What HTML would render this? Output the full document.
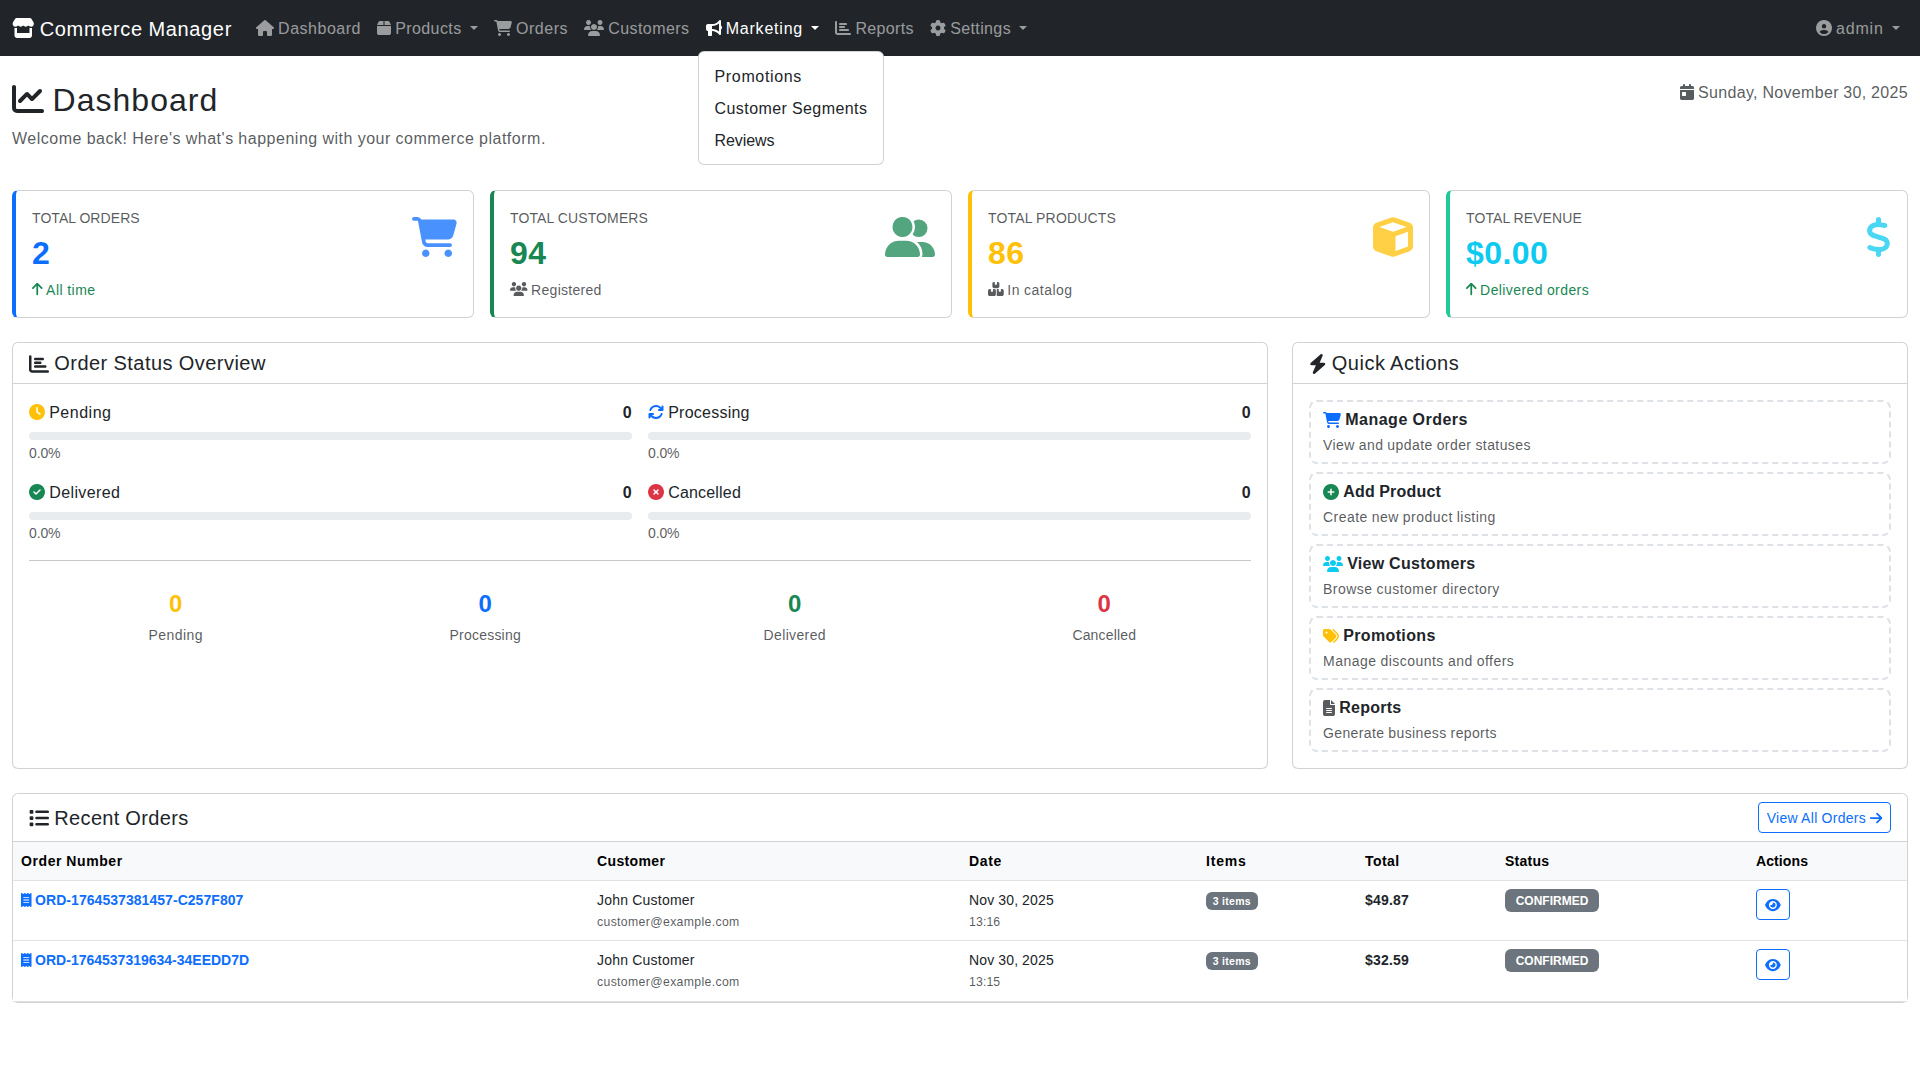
<!DOCTYPE html>
<html><head><meta charset="utf-8"><title>Commerce Manager - Dashboard</title>
<style>
*,*::before,*::after{box-sizing:border-box}
html,body{margin:0;padding:0}
body{font-family:"Liberation Sans", sans-serif;word-spacing:-0.018em;font-size:16px;line-height:1.5;color:#212529;background:#fff;width:1920px;height:1080px;overflow:hidden;position:relative}
.t{position:relative;top:.0415em}
svg.i{display:inline-block;height:1em;vertical-align:-0.125em;overflow:visible;fill:currentColor;position:relative;top:.0415em}
a{text-decoration:none;color:inherit}
h2,h4,h5,h6,p{margin:0}
/* navbar */
.navbar{position:relative;height:56px;background:#212529;padding:8px 0;}
.nav-c{display:flex;align-items:center;padding:0 12px;height:40px}
.brand{font-size:20px;line-height:30px;padding:5px 0;margin-right:16px;color:#fff;white-space:nowrap}
.nav{display:flex;list-style:none;margin:0;padding:0}
.nav.me-auto{margin-right:auto}
.nav li{position:relative}
.nl{display:block;padding:8px;color:rgba(255,255,255,.55);white-space:nowrap;line-height:24px}
.nl.act{color:#fff}
.dt::after{position:relative;top:1px;display:inline-block;margin-left:calc(.255em + 0.26em);vertical-align:.255em;content:"";border-top:.3em solid;border-right:.3em solid transparent;border-bottom:0;border-left:.3em solid transparent}
.dm{position:absolute;left:0;top:43px;z-index:10;min-width:160px;padding:8px 0;margin:0;list-style:none;background:#fff;border:1px solid rgba(0,0,0,.175);border-radius:6px;color:#212529}
.dm a{display:block;padding:4px 16px;white-space:nowrap;line-height:24px}
/* main */
.main{padding:24px 12px 0}
.hdr{display:flex;justify-content:space-between;align-items:flex-start;margin-bottom:24px}
.hdr h2{font-size:32px;line-height:1.2;font-weight:400;margin-bottom:8px}
.hdr p{margin-bottom:16px}
.muted{color:rgba(33,37,41,.75)}
.row{display:flex}
.card{position:relative;background:#fff;border:1px solid rgba(0,0,0,.175);border-radius:6px}
/* stat cards */
.stats{display:flex;gap:16px;margin-bottom:24px}
.stat{flex:1 1 0;height:128px;border-left:4px solid;}
.stat .body{padding:16px;display:flex;justify-content:space-between;align-items:flex-start;height:100%}
.stat .lbl{font-size:14px;line-height:21px;text-transform:uppercase;color:rgba(33,37,41,.75);letter-spacing:.75px}
.stat .num{font-size:32px;line-height:38.4px;font-weight:700;margin-top:6px}
.stat .sub{font-size:14px;line-height:21px;margin-top:6px}
.stat .big{font-size:40px;line-height:40px;opacity:.75;margin-top:10px}
.stat .big svg.i{top:0}
.stat .num .t{top:0}
.stat .sub .t{top:1.2px}
.qa p .t{top:1.5px}
.qa h6 .t{top:0}
.ch h5 .t{top:-.2px}
.c-primary{color:#0d6efd}.c-success{color:#198754}.c-warning{color:#ffc107}.c-info{color:#0dcaf0}.c-danger{color:#dc3545}
.b-primary{border-left-color:#0d6efd}.b-success{border-left-color:#198754}.b-warning{border-left-color:#ffc107}.b-info{border-left-color:#20c997}
/* mid row */
.mid{display:flex;gap:24px;margin-bottom:24px;height:427px}
.mid .card{height:100%}
.ch{padding:8px 16px;border-bottom:1px solid rgba(0,0,0,.175);background:#fff;border-radius:6px 6px 0 0}
.ch h5{font-size:20px;line-height:24px;font-weight:400}
.cb{padding:16px}
.osgrid{display:grid;grid-template-columns:1fr 1fr;column-gap:16px;row-gap:16px}
.os .top{display:flex;justify-content:space-between;margin-bottom:8px}
.prog{height:8px;background:#e9ecef;border-radius:6px}
.os .pct{font-size:14px}
.hr{border-top:1px solid rgba(33,37,41,.25);margin:16px 0}
.sums{display:grid;grid-template-columns:repeat(4,1fr);margin:0 -8px;padding-top:12px;text-align:center}
.sums h4{font-size:24px;line-height:28.8px;font-weight:700;margin-bottom:4px}
.sums .l{font-size:14px}
.qa{display:block;border:2px dashed #dee2e6;border-radius:8px;padding:8px 12px;margin-bottom:8px}
.qa:last-child{margin-bottom:0}
.qa h6{font-size:16px;line-height:19px;font-weight:700;margin-bottom:4px}
.qa p{font-size:14px;line-height:21px;color:rgba(33,37,41,.75)}
/* orders */
.ro .ch{display:flex;justify-content:space-between;align-items:center}
.btn-o{display:inline-block;border:1px solid #0d6efd;color:#0d6efd;border-radius:4px;padding:4px 8px;font-size:14px;line-height:21px;background:#fff}
table{border-collapse:collapse;width:100%;table-layout:fixed;font-size:14px;line-height:21px}
th{text-align:left;font-weight:700;padding:8px 8px 9px;background:#f8f9fa;border-bottom:1px solid #dee2e6;color:#000}
td{padding:8px;vertical-align:top;border-bottom:1px solid #dee2e6;background:#fff}
.badge{display:inline-block;font-size:10.5px;line-height:1;font-weight:700;color:#fff;background:#6c757d;border-radius:6px;padding:3.675px 6.825px;vertical-align:baseline}
.sbadge{display:inline-block;font-size:12px;line-height:1;font-weight:700;color:#fff;background:#6c757d;border-radius:6px;padding:5.25px 10.65px}
.small{font-size:12.25px}
tbody tr:last-child td{padding-bottom:9px}
.ord{color:#0d6efd;font-weight:700}
.eye{display:inline-block;border:1px solid #0d6efd;color:#0d6efd;border-radius:4px;padding:4px 8px;font-size:14px;line-height:21px}
</style></head><body><nav class="navbar"><div class="nav-c">
<a class="brand"><svg class="i" viewBox="0 0 576 512" style="width:1.1250em"><path d="M548 104 490 13 548 104 490 13Q482 0 466 0H110Q94 0 86 13L28 104Q7 141 22 178Q38 215 80 223Q86 224 92 224Q133 223 158 195Q182 223 223 224Q263 223 288 195Q313 223 353 224Q393 223 418 195Q443 223 484 224Q490 224 496 223Q538 215 554 178Q569 141 548 104ZM500 255Q492 256 483 256Q465 256 448 251V384H128V251Q111 256 92 256Q84 256 76 255Q70 254 64 253V384V448Q65 475 83 493Q101 511 128 512H448Q475 511 493 493Q511 475 512 448V384V253Q506 254 500 255Z"/></svg> <span class="t" style="letter-spacing:0.634px">Commerce Manager</span></a>
<ul class="nav me-auto">
<li><a class="nl"><svg class="i" viewBox="0 0 576 512" style="width:1.1250em"><path d="M576 256Q575 269 566 278Q557 287 544 288H512L513 448Q512 452 512 456V472Q512 489 500 500Q489 512 472 512H456Q454 512 453 512Q451 512 449 512H416H392Q375 512 364 500Q352 489 352 472V448V384Q352 370 343 361Q334 352 320 352H256Q242 352 233 361Q224 370 224 384V448V472Q224 489 212 500Q201 512 184 512H160H128Q127 512 126 512Q125 512 124 512Q122 512 120 512H104Q87 512 76 500Q64 489 64 472V360Q64 359 64 357V288H32Q18 287 9 278Q0 269 0 256Q0 242 10 232L266 8Q277 -1 288 0Q300 0 309 7L565 232Q577 242 576 256Z"/></svg> <span class="t" style="letter-spacing:0.507px">Dashboard</span></a></li>
<li><a class="nl dt"><svg class="i" viewBox="0 0 448 512" style="width:0.8750em"><path d="M51 59 0 160 51 59 0 160H208V32H94Q65 33 51 59ZM240 160H448H240H448L397 59Q383 33 354 32H240V160ZM448 192H0H448H0V416Q1 443 19 461Q37 479 64 480H384Q411 479 429 461Q447 443 448 416V192Z"/></svg> <span class="t" style="letter-spacing:0.420px">Products</span></a></li>
<li><a class="nl"><svg class="i" viewBox="0 0 576 512" style="width:1.1250em"><path d="M0 24Q2 2 24 0H70Q104 2 120 32H531Q551 33 563 48Q574 63 570 82L529 235Q522 259 503 273Q484 288 459 288H171L176 317Q181 335 200 336H488Q510 338 512 360Q510 382 488 384H200Q173 384 154 367Q134 351 129 326L77 55Q76 48 70 48H24Q2 46 0 24ZM128 464Q129 437 152 422Q176 410 200 422Q223 437 224 464Q223 491 200 506Q176 518 152 506Q129 491 128 464ZM464 416Q491 417 506 440Q518 464 506 488Q491 511 464 512Q437 511 422 488Q410 464 422 440Q437 417 464 416Z"/></svg> <span class="t" style="letter-spacing:0.503px">Orders</span></a></li>
<li><a class="nl"><svg class="i" viewBox="0 0 640 512" style="width:1.2500em"><path d="M144 0Q189 1 213 40Q235 80 213 120Q189 159 144 160Q99 159 75 120Q53 80 75 40Q99 1 144 0ZM512 0Q557 1 581 40Q603 80 581 120Q557 159 512 160Q467 159 443 120Q421 80 443 40Q467 1 512 0ZM0 299Q1 253 31 223Q61 193 107 192H149Q173 192 194 202Q192 213 192 224Q194 283 235 320Q235 320 235 320Q235 320 235 320H21Q2 318 0 299ZM405 320Q405 320 405 320Q405 320 405 320Q446 283 448 224Q448 213 446 202Q467 192 491 192H533Q579 193 609 223Q639 253 640 299Q638 318 619 320H405ZM224 224Q224 198 237 176Q250 154 272 141Q295 128 320 128Q345 128 368 141Q390 154 403 176Q416 198 416 224Q416 250 403 272Q390 294 368 307Q345 320 320 320Q295 320 272 307Q250 294 237 272Q224 250 224 224ZM128 485Q129 429 167 391Q205 353 261 352H379Q435 353 473 391Q511 429 512 485Q510 510 485 512H155Q130 510 128 485Z"/></svg> <span class="t" style="letter-spacing:0.448px">Customers</span></a></li>
<li><a class="nl dt act"><svg class="i" viewBox="0 0 512 512" style="width:1.0000em"><path d="M480 32Q479 11 460 2Q441 -5 425 9L382 53Q345 89 299 109Q252 128 201 128H192H64Q37 129 19 147Q1 165 0 192V288Q1 315 19 333Q37 351 64 352V480Q64 494 73 503Q82 512 96 512H160Q174 512 183 503Q192 494 192 480V352H201Q252 352 299 372Q345 391 382 427L425 471Q441 485 460 478Q479 469 480 448V300Q494 293 503 277Q512 261 512 240Q512 219 503 203Q494 187 480 180V32ZM416 109V240V109V240V371Q371 331 316 310Q261 288 201 288H192V192H201Q261 192 316 170Q371 149 416 109Z"/></svg> <span class="t" style="letter-spacing:0.783px">Marketing</span></a>
<ul class="dm"><li><a><span class="t" style="letter-spacing:0.652px">Promotions</span></a></li><li><a><span class="t" style="letter-spacing:0.428px">Customer Segments</span></a></li><li><a><span class="t" style="letter-spacing:-0.087px">Reviews</span></a></li></ul></li>
<li><a class="nl"><svg class="i" viewBox="0 0 512 512" style="width:1.0000em"><path d="M32 32Q46 32 55 41Q64 50 64 64V400Q65 415 80 416H480Q494 416 503 425Q512 434 512 448Q512 462 503 471Q494 480 480 480H80Q46 479 23 457Q1 434 0 400V64Q0 50 9 41Q18 32 32 32ZM128 128Q128 114 137 105Q146 96 160 96H352Q366 96 375 105Q384 114 384 128Q384 142 375 151Q366 160 352 160H160Q146 160 137 151Q128 142 128 128ZM160 192H288H160H288Q302 192 311 201Q320 210 320 224Q320 238 311 247Q302 256 288 256H160Q146 256 137 247Q128 238 128 224Q128 210 137 201Q146 192 160 192ZM160 288H416H160H416Q430 288 439 297Q448 306 448 320Q448 334 439 343Q430 352 416 352H160Q146 352 137 343Q128 334 128 320Q128 306 137 297Q146 288 160 288Z"/></svg> <span class="t" style="letter-spacing:0.359px">Reports</span></a></li>
<li><a class="nl dt"><svg class="i" viewBox="0 0 512 512" style="width:1.0000em"><path d="M496 167Q500 181 490 191L446 231Q448 243 448 256Q448 269 446 281L490 321Q500 331 496 345Q489 363 480 380L475 388Q465 404 453 419Q443 430 429 426L373 408Q353 424 329 433L317 491Q313 505 298 508Q278 512 256 512Q234 512 213 508Q199 505 195 491L183 433Q159 424 139 408L83 426Q69 430 59 419Q46 404 37 388L32 380Q23 363 16 346Q12 331 22 321L66 282Q64 269 64 256Q64 243 66 231L22 191Q12 181 16 167Q23 149 32 132L37 124Q46 108 59 93Q69 82 83 86L139 104Q159 88 183 78L195 21Q199 7 214 4Q234 0 256 0Q278 0 299 4Q313 7 317 21L329 78Q353 88 373 104L429 86Q443 82 453 93Q466 108 476 124L480 132Q489 149 496 167ZM256 336Q301 335 325 296Q347 256 325 216Q301 177 256 176Q211 177 187 216Q165 256 187 296Q211 335 256 336Z"/></svg> <span class="t" style="letter-spacing:0.385px">Settings</span></a></li>
</ul>
<ul class="nav"><li><a class="nl dt"><svg class="i" viewBox="0 0 512 512" style="width:1.0000em"><path d="M399 384Q382 355 353 338Q324 320 288 320H224Q188 320 159 338Q130 355 113 384Q140 414 176 431Q213 448 256 448Q299 448 336 431Q372 414 399 384ZM0 256Q1 186 34 128Q68 70 128 34Q189 0 256 0Q323 0 384 34Q444 70 478 128Q511 186 512 256Q511 326 478 384Q444 442 384 478Q323 512 256 512Q189 512 128 478Q68 442 34 384Q1 326 0 256ZM256 272Q297 271 318 236Q338 200 318 164Q297 129 256 128Q215 129 194 164Q174 200 194 236Q215 271 256 272Z"/></svg> <span class="t" style="letter-spacing:0.844px">admin</span></a></li></ul>
</div></nav><div class="main"><div class="hdr"><div>
<h2><svg class="i" viewBox="0 0 512 512" style="width:1.0000em"><path d="M64 64Q64 50 55 41Q46 32 32 32Q18 32 9 41Q0 50 0 64V400Q1 434 23 457Q46 479 80 480H480Q494 480 503 471Q512 462 512 448Q512 434 503 425Q494 416 480 416H80Q65 415 64 400V64ZM471 151Q480 141 480 128Q480 115 471 105Q461 96 448 96Q435 96 425 105L320 211L263 153Q253 144 240 144Q227 144 217 153L105 265Q96 275 96 288Q96 301 105 311Q115 320 128 320Q141 320 151 311L240 221L297 279Q307 288 320 288Q333 288 343 279L471 151Z"/></svg> <span class="t" style="letter-spacing:1.014px">Dashboard</span></h2>
<p class="muted"><span class="t" style="letter-spacing:0.518px">Welcome back! Here's what's happening with your commerce platform.</span></p>
</div>
<div class="muted"><svg class="i" viewBox="0 0 448 512" style="width:0.8750em"><path d="M128 0Q142 0 151 9Q160 18 160 32V64H288V32Q288 18 297 9Q306 0 320 0Q334 0 343 9Q352 18 352 32V64H400Q420 65 434 78Q447 92 448 112V160H0V112Q1 92 14 78Q28 65 48 64H96V32Q96 18 105 9Q114 0 128 0ZM0 192H448H0H448V464Q447 484 434 498Q420 511 400 512H48Q28 511 14 498Q1 484 0 464V192ZM80 256Q65 257 64 272V368Q65 383 80 384H176Q191 383 192 368V272Q191 257 176 256H80Z"/></svg> <span class="t" style="letter-spacing:0.333px">Sunday, November 30, 2025</span></div></div><div class="stats"><div class="card stat b-primary"><div class="body"><div>
<div class="lbl"><span class="t" style="letter-spacing:0.082px">Total Orders</span></div>
<div class="num c-primary"><span class="t" style="letter-spacing:0.516px">2</span></div>
<div class="sub c-success"><svg class="i" viewBox="0 0 384 512" style="width:0.7500em"><path d="M215 41Q205 32 192 32Q179 32 169 41L9 201Q0 211 0 224Q0 237 9 247Q19 256 32 256Q45 256 55 247L160 141V448Q160 462 169 471Q178 480 192 480Q206 480 215 471Q224 462 224 448V141L329 247Q339 256 352 256Q365 256 375 247Q384 237 384 224Q384 211 375 201L215 41Z"/></svg> <span class="t" style="letter-spacing:0.482px">All time</span></div>
</div><div class="big c-primary"><svg class="i" viewBox="0 0 576 512" style="width:1.1250em"><path d="M0 24Q2 2 24 0H70Q104 2 120 32H531Q551 33 563 48Q574 63 570 82L529 235Q522 259 503 273Q484 288 459 288H171L176 317Q181 335 200 336H488Q510 338 512 360Q510 382 488 384H200Q173 384 154 367Q134 351 129 326L77 55Q76 48 70 48H24Q2 46 0 24ZM128 464Q129 437 152 422Q176 410 200 422Q223 437 224 464Q223 491 200 506Q176 518 152 506Q129 491 128 464ZM464 416Q491 417 506 440Q518 464 506 488Q491 511 464 512Q437 511 422 488Q410 464 422 440Q437 417 464 416Z"/></svg></div></div></div><div class="card stat b-success"><div class="body"><div>
<div class="lbl"><span class="t" style="letter-spacing:0.131px">Total Customers</span></div>
<div class="num c-success"><span class="t" style="letter-spacing:0.508px">94</span></div>
<div class="sub muted"><svg class="i" viewBox="0 0 640 512" style="width:1.2500em"><path d="M144 0Q189 1 213 40Q235 80 213 120Q189 159 144 160Q99 159 75 120Q53 80 75 40Q99 1 144 0ZM512 0Q557 1 581 40Q603 80 581 120Q557 159 512 160Q467 159 443 120Q421 80 443 40Q467 1 512 0ZM0 299Q1 253 31 223Q61 193 107 192H149Q173 192 194 202Q192 213 192 224Q194 283 235 320Q235 320 235 320Q235 320 235 320H21Q2 318 0 299ZM405 320Q405 320 405 320Q405 320 405 320Q446 283 448 224Q448 213 446 202Q467 192 491 192H533Q579 193 609 223Q639 253 640 299Q638 318 619 320H405ZM224 224Q224 198 237 176Q250 154 272 141Q295 128 320 128Q345 128 368 141Q390 154 403 176Q416 198 416 224Q416 250 403 272Q390 294 368 307Q345 320 320 320Q295 320 272 307Q250 294 237 272Q224 250 224 224ZM128 485Q129 429 167 391Q205 353 261 352H379Q435 353 473 391Q511 429 512 485Q510 510 485 512H155Q130 510 128 485Z"/></svg> <span class="t" style="letter-spacing:0.280px">Registered</span></div>
</div><div class="big c-success"><svg class="i" viewBox="0 0 640 512" style="width:1.2500em"><path d="M96 128Q96 93 113 64Q130 35 160 17Q190 0 224 0Q258 0 288 17Q318 35 335 64Q352 93 352 128Q352 163 335 192Q318 221 288 239Q258 256 224 256Q190 256 160 239Q130 221 113 192Q96 163 96 128ZM0 482Q2 407 52 356Q103 306 178 304H270Q345 306 396 356Q446 407 448 482Q448 495 439 503Q431 512 418 512H30Q17 512 9 503Q0 495 0 482ZM609 512H471H609H471Q480 498 480 480V472Q480 426 461 387Q443 348 410 320Q410 320 410 320Q414 320 417 320H479Q547 322 593 367Q638 413 640 481Q640 494 631 503Q622 512 609 512ZM432 256Q384 255 353 223Q383 182 384 128Q384 87 366 54Q394 33 432 32Q480 33 511 65Q543 96 544 144Q543 192 511 223Q480 255 432 256Z"/></svg></div></div></div><div class="card stat b-warning"><div class="body"><div>
<div class="lbl"><span class="t" style="letter-spacing:0.191px">Total Products</span></div>
<div class="num c-warning"><span class="t" style="letter-spacing:0.508px">86</span></div>
<div class="sub muted"><svg class="i" viewBox="0 0 576 512" style="width:1.1250em"><path d="M248 0H208H248H208Q188 1 174 14Q161 28 160 48V160Q161 187 179 205Q197 223 224 224H352Q379 223 397 205Q415 187 416 160V48Q415 28 402 14Q388 1 368 0H328V80Q327 95 312 96H264Q249 95 248 80V0ZM64 256Q37 257 19 275Q1 293 0 320V448Q1 475 19 493Q37 511 64 512H224Q251 511 269 493Q287 475 288 448V320Q287 293 269 275Q251 257 224 256H184V336Q183 351 168 352H120Q105 351 104 336V256H64ZM352 512H512H352H512Q539 511 557 493Q575 475 576 448V320Q575 293 557 275Q539 257 512 256H472V336Q471 351 456 352H408Q393 351 392 336V256H352Q329 256 312 270Q320 286 320 304V464Q320 482 312 498Q329 512 352 512Z"/></svg> <span class="t" style="letter-spacing:0.478px">In catalog</span></div>
</div><div class="big c-warning"><svg class="i" viewBox="0 0 512 512" style="width:1.0000em"><path d="M235 6Q256 -2 278 6L470 74Q489 82 500 98Q512 114 512 135V377Q512 398 500 414Q489 430 470 438L278 506Q256 514 234 506L42 438Q23 431 12 414Q0 398 0 377V135Q0 114 12 98Q23 82 43 74L235 6ZM256 66 82 128 256 66 82 128 256 190 430 128 256 66ZM288 435 448 378 288 435 448 378V190L288 247V435Z"/></svg></div></div></div><div class="card stat b-info"><div class="body"><div>
<div class="lbl"><span class="t" style="letter-spacing:0.095px">Total Revenue</span></div>
<div class="num c-info"><span class="t" style="letter-spacing:0.428px">$0.00</span></div>
<div class="sub c-success"><svg class="i" viewBox="0 0 384 512" style="width:0.7500em"><path d="M215 41Q205 32 192 32Q179 32 169 41L9 201Q0 211 0 224Q0 237 9 247Q19 256 32 256Q45 256 55 247L160 141V448Q160 462 169 471Q178 480 192 480Q206 480 215 471Q224 462 224 448V141L329 247Q339 256 352 256Q365 256 375 247Q384 237 384 224Q384 211 375 201L215 41Z"/></svg> <span class="t" style="letter-spacing:0.408px">Delivered orders</span></div>
</div><div class="big c-info"><svg class="i" viewBox="0 0 320 512" style="width:0.6250em"><path d="M160 0Q174 0 183 9Q192 18 192 32V68Q194 68 197 68Q197 68 197 68Q198 69 198 69L246 77Q259 80 266 91Q274 101 272 115Q269 128 258 135Q248 142 234 140L187 132Q139 125 109 138Q81 150 80 166Q77 181 81 186Q83 192 94 199Q118 214 167 226L170 227Q171 227 171 227Q193 232 216 240Q240 248 260 260Q282 274 296 300Q308 327 302 359Q296 388 279 407Q261 426 236 436Q216 444 192 447V480Q192 494 183 503Q174 512 160 512Q146 512 137 503Q128 494 128 480V445Q128 445 127 445Q127 445 127 445H126Q107 442 82 435Q56 428 35 419Q23 413 18 401Q14 389 19 376Q25 364 37 360Q48 355 61 360Q78 367 99 373Q120 379 136 382Q185 388 212 377Q237 366 239 348Q241 332 238 327Q235 321 225 314Q200 299 151 288L148 287Q148 287 148 287Q126 281 102 273Q78 266 58 253Q36 239 23 213Q10 186 17 154Q22 126 41 107Q60 88 85 78Q105 70 128 67V32Q128 18 137 9Q146 0 160 0Z"/></svg></div></div></div></div><div class="mid"><div class="card" style="flex:0 0 1256px">
<div class="ch"><h5><svg class="i" viewBox="0 0 512 512" style="width:1.0000em"><path d="M32 32Q46 32 55 41Q64 50 64 64V400Q65 415 80 416H480Q494 416 503 425Q512 434 512 448Q512 462 503 471Q494 480 480 480H80Q46 479 23 457Q1 434 0 400V64Q0 50 9 41Q18 32 32 32ZM128 128Q128 114 137 105Q146 96 160 96H352Q366 96 375 105Q384 114 384 128Q384 142 375 151Q366 160 352 160H160Q146 160 137 151Q128 142 128 128ZM160 192H288H160H288Q302 192 311 201Q320 210 320 224Q320 238 311 247Q302 256 288 256H160Q146 256 137 247Q128 238 128 224Q128 210 137 201Q146 192 160 192ZM160 288H416H160H416Q430 288 439 297Q448 306 448 320Q448 334 439 343Q430 352 416 352H160Q146 352 137 343Q128 334 128 320Q128 306 137 297Q146 288 160 288Z"/></svg> <span class="t" style="letter-spacing:0.468px">Order Status Overview</span></h5></div>
<div class="cb">
<div class="osgrid"><div class="os"><div class="top"><span><span class="c-warning"><svg class="i" viewBox="0 0 512 512" style="width:1.0000em"><path d="M256 0Q326 1 384 34Q442 68 478 128Q512 189 512 256Q512 323 478 384Q442 444 384 478Q326 511 256 512Q186 511 128 478Q70 444 34 384Q0 323 0 256Q0 189 34 128Q70 68 128 34Q186 1 256 0ZM232 120V256V120V256Q232 269 243 276L339 340Q358 351 372 333Q383 314 365 300L280 243V120Q278 98 256 96Q234 98 232 120Z"/></svg></span> <span class="t" style="letter-spacing:0.511px">Pending</span></span><b><span class="t" style="letter-spacing:0.250px">0</span></b></div>
<div class="prog"></div><div><span class="pct muted"><span class="t" style="letter-spacing:-0.129px">0.0%</span></span></div></div><div class="os"><div class="top"><span><span class="c-primary"><svg class="i" viewBox="0 0 512 512" style="width:1.0000em"><path d="M105 203Q117 169 143 143Q192 96 256 96Q320 96 369 143L386 160H352Q338 160 329 169Q320 178 320 192Q320 206 329 215Q338 224 352 224H464Q464 224 464 224Q464 224 464 224Q478 224 487 215Q496 206 496 192V80Q496 66 487 57Q478 48 464 48Q450 48 441 57Q432 66 432 80V115L414 98Q370 54 313 39Q256 25 199 39Q142 54 98 98Q61 135 45 181Q41 194 46 206Q52 217 64 222Q77 226 89 221Q100 215 105 203ZM39 289Q31 292 25 298Q19 304 17 312Q17 313 16 315Q16 318 16 320V432Q16 446 25 455Q34 464 48 464Q62 464 71 455Q80 446 80 432V397L98 414Q142 458 199 473Q256 487 313 473Q370 458 414 414Q451 377 467 331Q471 318 466 306Q460 295 448 290Q435 286 423 291Q412 297 407 309Q395 343 369 369Q320 416 256 416Q192 416 143 369L126 352H160Q174 352 183 343Q192 334 192 320Q192 306 183 297Q174 288 160 288H48Q46 288 44 288Q41 289 39 289Z"/></svg></span> <span class="t" style="letter-spacing:0.239px">Processing</span></span><b><span class="t" style="letter-spacing:0.250px">0</span></b></div>
<div class="prog"></div><div><span class="pct muted"><span class="t" style="letter-spacing:-0.129px">0.0%</span></span></div></div><div class="os"><div class="top"><span><span class="c-success"><svg class="i" viewBox="0 0 512 512" style="width:1.0000em"><path d="M256 512Q326 511 384 478Q442 444 478 384Q512 323 512 256Q512 189 478 128Q442 68 384 34Q326 1 256 0Q186 1 128 34Q70 68 34 128Q0 189 0 256Q0 323 34 384Q70 444 128 478Q186 511 256 512ZM369 209 241 337 369 209 241 337Q224 351 207 337L143 273Q129 256 143 239Q160 225 177 239L224 286L335 175Q352 161 369 175Q383 192 369 209Z"/></svg></span> <span class="t" style="letter-spacing:0.408px">Delivered</span></span><b><span class="t" style="letter-spacing:0.250px">0</span></b></div>
<div class="prog"></div><div><span class="pct muted"><span class="t" style="letter-spacing:-0.129px">0.0%</span></span></div></div><div class="os"><div class="top"><span><span class="c-danger"><svg class="i" viewBox="0 0 512 512" style="width:1.0000em"><path d="M256 512Q326 511 384 478Q442 444 478 384Q512 323 512 256Q512 189 478 128Q442 68 384 34Q326 1 256 0Q186 1 128 34Q70 68 34 128Q0 189 0 256Q0 323 34 384Q70 444 128 478Q186 511 256 512ZM175 175Q192 161 209 175L256 222L303 175Q320 161 337 175Q351 192 337 209L290 256L337 303Q351 320 337 337Q320 351 303 337L256 290L209 337Q192 351 175 337Q161 320 175 303L222 256L175 209Q161 192 175 175Z"/></svg></span> <span class="t" style="letter-spacing:0.184px">Cancelled</span></span><b><span class="t" style="letter-spacing:0.250px">0</span></b></div>
<div class="prog"></div><div><span class="pct muted"><span class="t" style="letter-spacing:-0.129px">0.0%</span></span></div></div></div>
<div class="hr"></div>
<div class="sums"><div><h4 class="c-warning"><span class="t" style="letter-spacing:0.375px">0</span></h4><div><span class="l muted"><span class="t" style="letter-spacing:0.446px">Pending</span></span></div></div><div><h4 class="c-primary"><span class="t" style="letter-spacing:0.375px">0</span></h4><div><span class="l muted"><span class="t" style="letter-spacing:0.208px">Processing</span></span></div></div><div><h4 class="c-success"><span class="t" style="letter-spacing:0.375px">0</span></h4><div><span class="l muted"><span class="t" style="letter-spacing:0.358px">Delivered</span></span></div></div><div><h4 class="c-danger"><span class="t" style="letter-spacing:0.375px">0</span></h4><div><span class="l muted"><span class="t" style="letter-spacing:0.160px">Cancelled</span></span></div></div></div>
</div></div><div class="card" style="flex:1 1 auto">
<div class="ch"><h5><svg class="i" viewBox="0 0 448 512" style="width:0.8750em"><path d="M349 45Q358 22 339 6Q318 -7 299 8L43 232Q27 247 34 267Q43 287 64 288H176L99 467Q90 490 109 506Q130 519 149 504L405 280Q421 265 414 245Q406 225 384 224H273L349 45Z"/></svg> <span class="t" style="letter-spacing:0.504px">Quick Actions</span></h5></div>
<div class="cb">
<a class="qa"><h6><span class="c-primary"><svg class="i" viewBox="0 0 576 512" style="width:1.1250em"><path d="M0 24Q2 2 24 0H70Q104 2 120 32H531Q551 33 563 48Q574 63 570 82L529 235Q522 259 503 273Q484 288 459 288H171L176 317Q181 335 200 336H488Q510 338 512 360Q510 382 488 384H200Q173 384 154 367Q134 351 129 326L77 55Q76 48 70 48H24Q2 46 0 24ZM128 464Q129 437 152 422Q176 410 200 422Q223 437 224 464Q223 491 200 506Q176 518 152 506Q129 491 128 464ZM464 416Q491 417 506 440Q518 464 506 488Q491 511 464 512Q437 511 422 488Q410 464 422 440Q437 417 464 416Z"/></svg></span> <span class="t" style="letter-spacing:0.510px">Manage Orders</span></h6><p><span class="t" style="letter-spacing:0.412px">View and update order statuses</span></p></a>
<a class="qa"><h6><span class="c-success"><svg class="i" viewBox="0 0 512 512" style="width:1.0000em"><path d="M256 512Q326 511 384 478Q442 444 478 384Q512 323 512 256Q512 189 478 128Q442 68 384 34Q326 1 256 0Q186 1 128 34Q70 68 34 128Q0 189 0 256Q0 323 34 384Q70 444 128 478Q186 511 256 512ZM232 344V280V344V280H168Q146 278 144 256Q146 234 168 232H232V168Q234 146 256 144Q278 146 280 168V232H344Q366 234 368 256Q366 278 344 280H280V344Q278 366 256 368Q234 366 232 344Z"/></svg></span> <span class="t" style="letter-spacing:0.202px">Add Product</span></h6><p><span class="t" style="letter-spacing:0.451px">Create new product listing</span></p></a>
<a class="qa"><h6><span class="c-info"><svg class="i" viewBox="0 0 640 512" style="width:1.2500em"><path d="M144 0Q189 1 213 40Q235 80 213 120Q189 159 144 160Q99 159 75 120Q53 80 75 40Q99 1 144 0ZM512 0Q557 1 581 40Q603 80 581 120Q557 159 512 160Q467 159 443 120Q421 80 443 40Q467 1 512 0ZM0 299Q1 253 31 223Q61 193 107 192H149Q173 192 194 202Q192 213 192 224Q194 283 235 320Q235 320 235 320Q235 320 235 320H21Q2 318 0 299ZM405 320Q405 320 405 320Q405 320 405 320Q446 283 448 224Q448 213 446 202Q467 192 491 192H533Q579 193 609 223Q639 253 640 299Q638 318 619 320H405ZM224 224Q224 198 237 176Q250 154 272 141Q295 128 320 128Q345 128 368 141Q390 154 403 176Q416 198 416 224Q416 250 403 272Q390 294 368 307Q345 320 320 320Q295 320 272 307Q250 294 237 272Q224 250 224 224ZM128 485Q129 429 167 391Q205 353 261 352H379Q435 353 473 391Q511 429 512 485Q510 510 485 512H155Q130 510 128 485Z"/></svg></span> <span class="t" style="letter-spacing:0.310px">View Customers</span></h6><p><span class="t" style="letter-spacing:0.468px">Browse customer directory</span></p></a>
<a class="qa"><h6><span class="c-warning"><svg class="i" viewBox="0 0 512 512" style="width:1.0000em"><path d="M345 39 473 168 345 39 473 168Q512 210 512 264Q512 318 473 360L361 473Q344 487 327 473Q313 456 327 439L439 326Q464 299 464 264Q464 229 439 202L311 73Q297 56 311 39Q328 25 345 39ZM0 230V80V230V80Q1 60 14 46Q28 33 48 32H198Q224 32 243 51L411 219Q430 238 430 264Q430 289 411 309L277 443Q258 461 232 461Q207 461 187 443L19 275Q0 256 0 230ZM144 144Q144 130 135 121Q126 112 112 112Q98 112 89 121Q80 130 80 144Q80 158 89 167Q98 176 112 176Q126 176 135 167Q144 158 144 144Z"/></svg></span> <span class="t" style="letter-spacing:0.364px">Promotions</span></h6><p><span class="t" style="letter-spacing:0.467px">Manage discounts and offers</span></p></a>
<a class="qa"><h6><span class="muted"><svg class="i" viewBox="0 0 384 512" style="width:0.7500em"><path d="M64 0Q37 1 19 19Q1 37 0 64V448Q1 475 19 493Q37 511 64 512H320Q347 511 365 493Q383 475 384 448V160H256Q242 160 233 151Q224 142 224 128V0H64ZM256 0V128V0V128H384L256 0ZM112 256H272H112H272Q287 257 288 272Q287 287 272 288H112Q97 287 96 272Q97 257 112 256ZM112 320H272H112H272Q287 321 288 336Q287 351 272 352H112Q97 351 96 336Q97 321 112 320ZM112 384H272H112H272Q287 385 288 400Q287 415 272 416H112Q97 415 96 400Q97 385 112 384Z"/></svg></span> <span class="t" style="letter-spacing:0.263px">Reports</span></h6><p><span class="t" style="letter-spacing:0.376px">Generate business reports</span></p></a>
</div></div></div><div class="card ro">
<div class="ch"><h5><svg class="i" viewBox="0 0 512 512" style="width:1.0000em"><path d="M40 48Q18 50 16 72V120Q18 142 40 144H88Q110 142 112 120V72Q110 50 88 48H40ZM192 64Q178 64 169 73Q160 82 160 96Q160 110 169 119Q178 128 192 128H480Q494 128 503 119Q512 110 512 96Q512 82 503 73Q494 64 480 64H192ZM192 224Q178 224 169 233Q160 242 160 256Q160 270 169 279Q178 288 192 288H480Q494 288 503 279Q512 270 512 256Q512 242 503 233Q494 224 480 224H192ZM192 384Q178 384 169 393Q160 402 160 416Q160 430 169 439Q178 448 192 448H480Q494 448 503 439Q512 430 512 416Q512 402 503 393Q494 384 480 384H192ZM16 232V280V232V280Q18 302 40 304H88Q110 302 112 280V232Q110 210 88 208H40Q18 210 16 232ZM40 368Q18 370 16 392V440Q18 462 40 464H88Q110 462 112 440V392Q110 370 88 368H40Z"/></svg> <span class="t" style="letter-spacing:0.347px">Recent Orders</span></h5><a class="btn-o"><span class="t" style="letter-spacing:0.309px">View All Orders</span> <svg class="i" viewBox="0 0 448 512" style="width:0.8750em"><path d="M439 279Q448 269 448 256Q448 243 439 233L279 73Q269 64 256 64Q243 64 233 73Q224 83 224 96Q224 109 233 119L339 224H32Q18 224 9 233Q0 242 0 256Q0 270 9 279Q18 288 32 288H339L233 393Q224 403 224 416Q224 429 233 439Q243 448 256 448Q269 448 279 439L439 279Z"/></svg></a></div>
<table><colgroup><col style="width:576px"><col style="width:372px"><col style="width:237px"><col style="width:159px"><col style="width:140px"><col style="width:251px"><col></colgroup>
<thead><tr><th><span class="t" style="letter-spacing:0.595px">Order Number</span></th><th><span class="t" style="letter-spacing:0.357px">Customer</span></th><th><span class="t" style="letter-spacing:0.680px">Date</span></th><th><span class="t" style="letter-spacing:0.797px">Items</span></th><th><span class="t" style="letter-spacing:0.416px">Total</span></th><th><span class="t" style="letter-spacing:0.266px">Status</span></th><th><span class="t" style="letter-spacing:0.103px">Actions</span></th></tr></thead>
<tbody><tr><td><a class="ord"><svg class="i" viewBox="0 0 384 512" style="width:0.7500em"><path d="M14 2Q28 -4 40 6L80 40L120 6Q136 -6 152 6L192 40L232 6Q248 -6 264 6L304 40L344 6Q356 -3 370 2Q383 9 384 24V488Q383 503 370 510Q356 516 344 506L304 472L264 506Q248 518 232 506L192 472L152 506Q136 518 120 506L80 472L40 506Q28 516 14 510Q1 503 0 488V24Q1 9 14 2ZM96 144Q81 145 80 160Q81 175 96 176H288Q303 175 304 160Q303 145 288 144H96ZM80 352Q81 367 96 368H288Q303 367 304 352Q303 337 288 336H96Q81 337 80 352ZM96 240Q81 241 80 256Q81 271 96 272H288Q303 271 304 256Q303 241 288 240H96Z"/></svg> <span class="t" style="letter-spacing:0.048px">ORD-1764537381457-C257F807</span></a></td>
<td><span class="t" style="letter-spacing:0.237px">John Customer</span><br><span class="small muted"><span class="t" style="letter-spacing:0.351px">customer@example.com</span></span></td>
<td><span class="t" style="letter-spacing:0.193px">Nov 30, 2025</span><br><span class="small muted"><span class="t" style="letter-spacing:0.131px">13:16</span></span></td>
<td><span class="badge"><span class="t" style="letter-spacing:0.330px">3 items</span></span></td>
<td><b><span class="t" style="letter-spacing:0.193px">$49.87</span></b></td>
<td><span class="sbadge"><span class="t">CONFIRMED</span></span></td>
<td><a class="eye"><svg class="i" viewBox="0 0 576 512" style="width:1.1250em"><path d="M288 32Q227 33 179 56Q131 79 95 113Q60 146 37 181Q14 216 3 244Q-2 256 3 268Q14 296 37 331Q60 366 95 399Q131 433 179 456Q227 479 288 480Q349 479 397 456Q445 433 481 399Q516 366 539 331Q562 296 574 268Q579 256 574 244Q562 216 539 181Q516 146 481 113Q445 79 397 56Q349 33 288 32ZM144 256Q144 217 163 184Q182 151 216 131Q250 112 288 112Q326 112 360 131Q394 151 413 184Q432 217 432 256Q432 295 413 328Q394 361 360 381Q326 400 288 400Q250 400 216 381Q182 361 163 328Q144 295 144 256ZM288 192Q287 219 269 237Q251 255 224 256Q213 256 204 253Q194 251 192 260Q192 270 195 281Q207 320 240 339Q273 358 313 349Q352 337 371 304Q390 271 381 231Q372 200 348 181Q323 162 292 160Q283 162 285 172Q288 181 288 192Z"/></svg></a></td></tr><tr><td><a class="ord"><svg class="i" viewBox="0 0 384 512" style="width:0.7500em"><path d="M14 2Q28 -4 40 6L80 40L120 6Q136 -6 152 6L192 40L232 6Q248 -6 264 6L304 40L344 6Q356 -3 370 2Q383 9 384 24V488Q383 503 370 510Q356 516 344 506L304 472L264 506Q248 518 232 506L192 472L152 506Q136 518 120 506L80 472L40 506Q28 516 14 510Q1 503 0 488V24Q1 9 14 2ZM96 144Q81 145 80 160Q81 175 96 176H288Q303 175 304 160Q303 145 288 144H96ZM80 352Q81 367 96 368H288Q303 367 304 352Q303 337 288 336H96Q81 337 80 352ZM96 240Q81 241 80 256Q81 271 96 272H288Q303 271 304 256Q303 241 288 240H96Z"/></svg> <span class="t">ORD-1764537319634-34EEDD7D</span></a></td>
<td><span class="t" style="letter-spacing:0.237px">John Customer</span><br><span class="small muted"><span class="t" style="letter-spacing:0.351px">customer@example.com</span></span></td>
<td><span class="t" style="letter-spacing:0.193px">Nov 30, 2025</span><br><span class="small muted"><span class="t" style="letter-spacing:0.131px">13:15</span></span></td>
<td><span class="badge"><span class="t" style="letter-spacing:0.330px">3 items</span></span></td>
<td><b><span class="t" style="letter-spacing:0.193px">$32.59</span></b></td>
<td><span class="sbadge"><span class="t">CONFIRMED</span></span></td>
<td><a class="eye"><svg class="i" viewBox="0 0 576 512" style="width:1.1250em"><path d="M288 32Q227 33 179 56Q131 79 95 113Q60 146 37 181Q14 216 3 244Q-2 256 3 268Q14 296 37 331Q60 366 95 399Q131 433 179 456Q227 479 288 480Q349 479 397 456Q445 433 481 399Q516 366 539 331Q562 296 574 268Q579 256 574 244Q562 216 539 181Q516 146 481 113Q445 79 397 56Q349 33 288 32ZM144 256Q144 217 163 184Q182 151 216 131Q250 112 288 112Q326 112 360 131Q394 151 413 184Q432 217 432 256Q432 295 413 328Q394 361 360 381Q326 400 288 400Q250 400 216 381Q182 361 163 328Q144 295 144 256ZM288 192Q287 219 269 237Q251 255 224 256Q213 256 204 253Q194 251 192 260Q192 270 195 281Q207 320 240 339Q273 358 313 349Q352 337 371 304Q390 271 381 231Q372 200 348 181Q323 162 292 160Q283 162 285 172Q288 181 288 192Z"/></svg></a></td></tr></tbody></table>
</div></div></body></html>
